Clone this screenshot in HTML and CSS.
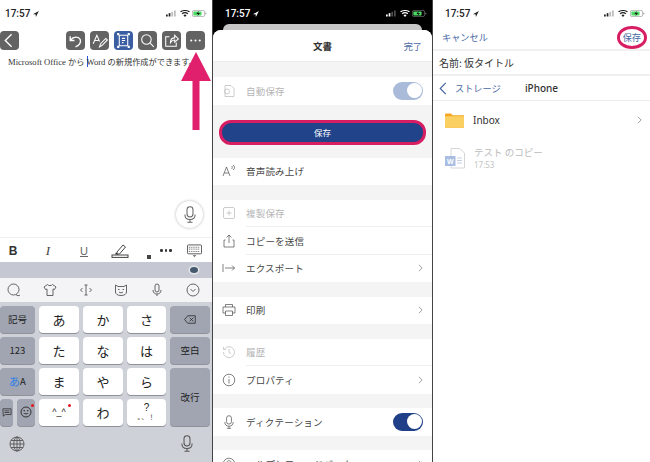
FILE: index.html
```html
<!DOCTYPE html>
<html lang="ja">
<head>
  <meta charset="UTF-8">
  <title>Word 保存手順</title>
  <link rel="stylesheet" href="styles.css">
</head>
<body>

  <svg class="defs" width="0" height="0">
    <symbol id="signal" viewBox="0 0 18 9">
      <rect x="0" y="6" width="2.6" height="3" fill="currentColor"/>
      <rect x="4" y="4" width="2.6" height="5" fill="currentColor"/>
      <rect x="8" y="2" width="2.6" height="7" opacity=".3" fill="currentColor"/>
      <rect x="12" y="0" width="2.6" height="9" opacity=".3" fill="currentColor"/>
    </symbol>
    <symbol id="wifi" viewBox="0 0 14 10">
      <path d="M7 10 9.2 7.4C8 6.3 6 6.3 4.8 7.4ZM3.6 6 2.3 4.5C4.9 2.2 9.1 2.2 11.7 4.5L10.4 6C8.5 4.3 5.5 4.3 3.6 6ZM1.2 3.3 0 1.9C3.9-.7 10.1-.7 14 1.9L12.8 3.3C9.5.9 4.5.9 1.2 3.3Z" fill="currentColor"/>
    </symbol>
    <symbol id="battery" viewBox="0 0 22 10">
      <rect x=".5" y=".5" width="18" height="9" rx="2.4" fill="none" stroke="currentColor" opacity=".45"/>
      <rect x="2" y="2" width="12" height="6" rx="1" fill="#4cd964"/>
      <rect x="19.6" y="3.4" width="1.4" height="3.2" rx=".7" fill="currentColor" opacity=".5"/>
      <path d="M10 1 6.5 5.6H9L8 9l3.6-4.8H9Z" fill="#111"/>
    </symbol>
    <symbol id="chevron" viewBox="0 0 6 10">
      <path d="M1 1 5 5 1 9" fill="none" stroke="currentColor" stroke-width="1"/>
    </symbol>
    <symbol id="mic" viewBox="0 0 14 20">
      <rect x="3.5" y="1" width="7" height="12" rx="3.5" fill="none" stroke="currentColor" stroke-width="1.2"/>
      <path d="M1 10c0 4 2.500 6 6 6s6-2 6-6M7 16v3M4 19h6" fill="none" stroke="currentColor" stroke-width="1.200"/>
    </symbol>
  </svg>

  <div class="shots">

    <section class="phone">
      <div class="status">
        <span class="time">17:57 <i class="loc"></i></span>
        <span class="status-icons">
          <svg class="ic-signal"><use href="#signal"/></svg>
          <svg class="ic-wifi"><use href="#wifi"/></svg>
          <svg class="ic-battery"><use href="#battery"/></svg>
        </span>
      </div>

      <div class="toolbar">
        <span class="tool">
          <svg viewBox="0 0 18 18"><path d="M11 3 5 9l6 6" class="line"/></svg>
        </span>
        <span class="tool-space"></span>
        <span class="tool">
          <svg viewBox="0 0 18 18"><path d="M4 5v4h4M4.500 8.500C7 5 12 5 13.500 8c1 3-1 6-4.500 7" class="line"/></svg>
        </span>
        <span class="tool">
          <svg viewBox="0 0 18 18"><path d="M3 12 6.500 4 9 10M4.500 9H8M9 15l1-3 5-5 1.500 1.500-5 5Z" class="line thin"/></svg>
        </span>
        <span class="tool active">
          <svg viewBox="0 0 18 18"><path d="M5 4h8v10H5ZM7.500 7h3M7.500 9h3M7.500 11h1.500" class="line thin"/><path d="M3 2h2v2H3ZM13 2h2v2h-2ZM3 14h2v2H3ZM13 14h2v2h-2Z" fill="#fff"/></svg>
        </span>
        <span class="tool">
          <svg viewBox="0 0 18 18"><circle cx="8" cy="8" r="4.500" class="line thin"/><path d="m11.500 11.500 3.500 3.500" class="line thin"/></svg>
        </span>
        <span class="tool">
          <svg viewBox="0 0 18 18"><path d="M13.500 11v3.500h-10v-9H7M8 11c0-3 2-4.500 4-4.500V4l3.500 3.500L12 10.500V8.500c-2 0-3 1-4 2.500Z" class="line thin"/></svg>
        </span>
        <span class="tool">
          <svg viewBox="0 0 18 18"><circle cx="5" cy="9" r="1" fill="#fff"/><circle cx="9" cy="9" r="1" fill="#fff"/><circle cx="13" cy="9" r="1" fill="#fff"/></svg>
        </span>
      </div>

      <p class="doc-text">Microsoft Office <span class="doc-ja">から</span> <span class="caret"></span>Word <span class="doc-ja">の新規作成ができます。</span></p>

      <div class="doc-space">
        <span class="mic-btn"><svg><use href="#mic"/></svg></span>
      </div>

      <div class="format-bar">
        <span class="fmt fmt-b">B</span>
        <span class="fmt fmt-i">I</span>
        <span class="fmt fmt-u">U</span>
        <svg class="fmt-pen" viewBox="0 0 18 14"><path d="m6 8 6-7 2.500 2-6 7H6Z" fill="none" stroke="#444"/><path d="M5 8.500 4 10.500h3Z" fill="#222"/><rect x="1" y="11" width="16" height="2.400" fill="none" stroke="#444"/></svg>
        <i class="fmt-dot"></i>
        <span class="fmt-more"><i></i><i></i><i></i></span>
        <svg class="fmt-kb" viewBox="0 0 16 14"><rect x=".5" y=".5" width="15" height="9.500" rx="1" fill="none" stroke="#555"/><path d="M2 3h12M2 5h12M2 7.500h12" stroke="#555" stroke-dasharray="1 1"/><path d="m6 11.500 2 2 2-2" fill="#555"/></svg>
      </div>

      <div class="strip"><span class="strip-eye"></span></div>

      <div class="kb-tools">
        <svg viewBox="0 0 14 14"><circle cx="6.500" cy="6.500" r="5.500" class="kb-line"/><path d="M9 11.500c1 1.500 3 1.500 4 .5" class="kb-line"/></svg>
        <svg viewBox="0 0 14 14"><path d="M4.500 1.500 1 4l1.500 2.500L4 6v6.500h6V6l1.500.5L13 4 9.500 1.500c-1 1.500-4 1.500-5 0Z" class="kb-line"/></svg>
        <svg viewBox="0 0 14 14"><path d="M7 2v10M5.500 2h3M5.500 12h3M3.500 5 1.500 7l2 2M10.500 5l2 2-2 2" class="kb-line"/></svg>
        <svg viewBox="0 0 14 14"><path d="M1.500 2 4 3.500h6L12.500 2v7c0 2-2 3.500-5.500 3.500S1.500 11 1.500 9ZM4 6.500h1.500M8.500 6.500H10M5 9c1 1 3 1 4 0" class="kb-line"/></svg>
        <svg viewBox="0 0 14 14"><rect x="5" y="1" width="4" height="8" rx="2" class="kb-line"/><path d="M3 7c0 3 2 4 4 4s4-1 4-4M7 11v2" class="kb-line"/></svg>
        <svg viewBox="0 0 14 14"><circle cx="7" cy="7" r="6" class="kb-line"/><path d="m4.500 6 2.500 2.500L9.500 6" class="kb-line"/></svg>
      </div>

      <div class="keyboard">
        <div class="keys">
          <span class="key gray small">記号</span>
          <span class="key">あ</span>
          <span class="key">か</span>
          <span class="key">さ</span>
          <span class="key gray">
            <svg class="del" viewBox="0 0 16 11"><path d="M5 .5h10v10H5L.8 5.500Z" fill="none" stroke="#222"/><path d="m7.500 3 5 5M12.500 3l-5 5" stroke="#222"/></svg>
          </span>
          <span class="key gray small">123</span>
          <span class="key">た</span>
          <span class="key">な</span>
          <span class="key">は</span>
          <span class="key gray small">空白</span>
          <span class="key gray small"><b class="kana">あ</b>A</span>
          <span class="key">ま</span>
          <span class="key">や</span>
          <span class="key">ら</span>
          <span class="key gray small tall">改行</span>
          <span class="key-pair">
            <span class="key gray">
              <svg class="msg" viewBox="0 0 12 11"><path d="M1 1h10v7H4L1.500 10Z" fill="none" stroke="#333"/><path d="M3 3.500h6M3 5.500h6" stroke="#333"/></svg>
            </span>
            <span class="key gray emoji-key">
              <svg class="smile" viewBox="0 0 12 12"><circle cx="6" cy="6" r="5" fill="none" stroke="#333"/><circle cx="4.200" cy="4.800" r=".8" fill="#333"/><circle cx="7.800" cy="4.800" r=".8" fill="#333"/><path d="M3.500 7.200c1 1.500 4 1.500 5 0Z" fill="#333"/></svg>
              <i class="red-dot"></i>
            </span>
          </span>
          <span class="key face">^_^<i class="red-dot"></i></span>
          <span class="key">わ</span>
          <span class="key punct"><span class="punct-q">?</span><small>。、！</small></span>
        </div>
        <div class="kb-bottom">
          <svg class="globe" viewBox="0 0 16 16"><circle cx="8" cy="8" r="7" class="kb-line"/><ellipse cx="8" cy="8" rx="3.200" ry="7" class="kb-line"/><path d="M8 1v14M1 8h14M2 4.500h12M2 11.500h12" class="kb-line"/></svg>
          <svg class="kb-mic"><use href="#mic"/></svg>
        </div>
      </div>

      <svg class="arrow" viewBox="0 0 30 78"><path d="M15 0 30 29H18.500V78H11.500V29H0Z" fill="#e0206c"/></svg>
    </section>

    <section class="phone dark">
      <div class="status">
        <span class="time">17:57 <i class="loc"></i></span>
        <span class="status-icons">
          <svg class="ic-signal"><use href="#signal"/></svg>
          <svg class="ic-wifi"><use href="#wifi"/></svg>
          <svg class="ic-battery"><use href="#battery"/></svg>
        </span>
      </div>
      <div class="sheet-back"></div>
      <div class="sheet">
        <div class="sheet-head">
          <span class="sheet-title">文書</span>
          <span class="link">完了</span>
        </div>

        <div class="menu first">
          <div class="row off">
            <svg class="row-ic" viewBox="0 0 14 14"><path d="M3 1.500h6L12 4.500v8H3Z" class="ic-line"/><circle cx="5" cy="7.500" r="2.500" class="ic-line"/></svg>
            <span class="row-text">自動保存</span>
            <span class="switch pale"></span>
          </div>
        </div>

        <div class="save-wrap"><span class="save-btn">保存</span></div>

        <div class="menu">
          <div class="row">
            <svg class="row-ic" viewBox="0 0 14 14"><path d="M1 12 4.500 3 8 12M2.300 9h4.400M9.500 2c1 .8 1 2 0 3M11 1c2 1.500 2 3.500 0 5" class="ic-line"/></svg>
            <span class="row-text">音声読み上げ</span>
          </div>
        </div>

        <div class="menu">
          <div class="row off line-below">
            <svg class="row-ic" viewBox="0 0 14 14"><rect x="1.500" y="1.500" width="11" height="11" rx="1.500" class="ic-line"/><path d="M7 4.500v5M4.500 7h5" class="ic-line"/></svg>
            <span class="row-text">複製保存</span>
          </div>
          <div class="row line-below">
            <svg class="row-ic" viewBox="0 0 14 14"><path d="M3.500 6H2v7h10V6h-1.500M7 9V1M4.500 3.500 7 1l2.500 2.500" class="ic-line"/></svg>
            <span class="row-text">コピーを送信</span>
          </div>
          <div class="row">
            <svg class="row-ic" viewBox="0 0 14 14"><path d="M1 3v8M3 7h9.500M10 4.500 12.500 7 10 9.500" class="ic-line"/></svg>
            <span class="row-text">エクスポート</span>
            <svg class="chev"><use href="#chevron"/></svg>
          </div>
        </div>

        <div class="menu">
          <div class="row">
            <svg class="row-ic" viewBox="0 0 14 14"><path d="M3.500 4V1.500h7V4M3.500 10H1V4h12v6h-2.500M3.500 8h7v4.500h-7Z" class="ic-line"/></svg>
            <span class="row-text">印刷</span>
            <svg class="chev"><use href="#chevron"/></svg>
          </div>
        </div>

        <div class="menu">
          <div class="row off line-below">
            <svg class="row-ic" viewBox="0 0 14 14"><path d="M2.500 4A5.500 5.500 0 1 1 1.500 7M1.500 2v2.500H4M7 4v3.500l2 1" class="ic-line"/></svg>
            <span class="row-text">履歴</span>
          </div>
          <div class="row">
            <svg class="row-ic" viewBox="0 0 14 14"><circle cx="7" cy="7" r="5.800" class="ic-line"/><path d="M7 6v4.500M7 3.500v1.200" class="ic-line"/></svg>
            <span class="row-text">プロパティ</span>
            <svg class="chev"><use href="#chevron"/></svg>
          </div>
        </div>

        <div class="menu">
          <div class="row">
            <svg class="row-ic mic-ic"><use href="#mic"/></svg>
            <span class="row-text">ディクテーション</span>
            <span class="switch"></span>
          </div>
        </div>

        <div class="menu">
          <div class="row">
            <svg class="row-ic" viewBox="0 0 14 14"><circle cx="7" cy="7" r="5.800" class="ic-line"/><path d="M5 5.500c0-2.500 4-2.500 4 0 0 1.500-2 1.500-2 3" class="ic-line"/></svg>
            <span class="row-text">ヘルプとフィードバック</span>
            <svg class="chev"><use href="#chevron"/></svg>
          </div>
        </div>
      </div>
    </section>

    <section class="phone">
      <div class="status">
        <span class="time">17:57 <i class="loc"></i></span>
        <span class="status-icons">
          <svg class="ic-signal"><use href="#signal"/></svg>
          <svg class="ic-wifi"><use href="#wifi"/></svg>
          <svg class="ic-battery"><use href="#battery"/></svg>
        </span>
      </div>

      <div class="save-head">
        <span class="link">キャンセル</span>
        <span class="link ringed">保存</span>
      </div>

      <div class="name-row">名前: 仮タイトル</div>

      <div class="crumbs">
        <svg class="back" viewBox="0 0 8 14"><path d="M7 1 1 7l6 6" fill="none" stroke="#3f5f9e" stroke-width="1.200"/></svg>
        <span class="link">ストレージ</span>
        <span class="crumb-title">iPhone</span>
      </div>

      <div class="file-row">
        <svg class="folder" viewBox="0 0 20 15"><path d="M0 1.500C0 .7.500 0 1.300 0h5L8 2h12v13H0Z" fill="#f6a623"/><rect y="3" width="20" height="12" rx="1" fill="#fbd063"/></svg>
        <span class="file-name">Inbox</span>
        <svg class="chev"><use href="#chevron"/></svg>
      </div>

      <div class="file-row disabled">
        <svg class="word" viewBox="0 0 20 21"><path d="M6 .5h8.500L19.500 5v15H6Z" fill="#fff" stroke="#d5d5d5"/><path d="M12 10h5M12 12.500h5M12 15h5" stroke="#c5d0e4"/><rect y="8" width="10.500" height="10" fill="#a9bee2"/><text x="5.200" y="16" class="word-w">W</text></svg>
        <span class="file-info">
          <span class="file-title">テスト のコピー</span>
          <span class="file-date">17:53</span>
        </span>
      </div>
    </section>

  </div>

</body>
</html>
```

FILE: styles.css
```css
* {
  box-sizing: border-box;
}

html, body {
  margin: 0;
  height: 462px;
  overflow: hidden;
}

body {
  font-family: "Noto Sans CJK JP", "Noto Sans", sans-serif;
  color: #333;
  background: #fff;
}

.defs {
  position: absolute;
}

.shots {
  display: grid;
  grid-template-columns: 212px 219px 217px;
  gap: 1px;
  height: 462px;
  background: #444;
}

.phone {
  position: relative;
  display: flex;
  flex-direction: column;
  height: 462px;
  overflow: hidden;
  background: #fff;
}

.phone.dark {
  background: #000;
  color: #fff;
}

/* status bar */
.status {
  flex: none;
  height: 24px;
  padding: 3px 5px 0 5px;
  display: flex;
  justify-content: space-between;
  align-items: center;
  font: 500 10px Roboto, sans-serif;
  color: #222;
}

.phone.dark .status {
  color: #fff;
  padding-left: 12px;
}

.phone:last-child .status {
  padding-left: 12px;
}

.loc {
  display: inline-block;
  width: 6px;
  height: 6px;
  background: currentColor;
  clip-path: polygon(100% 0, 0 55%, 45% 55%, 50% 100%);
}

.status-icons {
  display: flex;
  align-items: center;
  gap: 2px;
}

.status-icons svg {
  color: inherit;
}

.ic-signal {
  width: 12px;
  height: 7px;
}

.ic-wifi {
  width: 10px;
  height: 7px;
}

.ic-battery {
  width: 15px;
  height: 7px;
}

/* word toolbar */
.toolbar {
  flex: none;
  height: 19px;
  margin-top: 7px;
  padding-right: 7px;
  display: flex;
  gap: 5px;
}

.tool {
  width: 19px;
  height: 19px;
  border-radius: 4px;
  background: #636363;
}

.tool svg {
  display: block;
  width: 19px;
  height: 19px;
}

.tool.active {
  background: #3b5ea3;
}

.tool-space {
  flex: 1;
}

.line {
  fill: none;
  stroke: #fff;
  stroke-width: 1.300;
}

.line.thin {
  stroke-width: 1;
}

.doc-text {
  margin: 4px 0 0 8px;
  font: 8.600px/16px "Liberation Serif", "Noto Sans CJK JP", serif;
  white-space: nowrap;
  color: #333;
}

.doc-ja {
  font-size: 8.200px;
}

.caret {
  display: inline-block;
  width: 1px;
  height: 11px;
  margin-right: -1px;
  vertical-align: -2px;
  background: #2b55d8;
}

.doc-space {
  flex: 1;
  display: flex;
  justify-content: flex-end;
  align-items: flex-end;
  padding: 0 9px 9px 0;
}

.mic-btn {
  width: 27px;
  height: 27px;
  border-radius: 50%;
  background: #fff;
  box-shadow: 0 0 3px rgba(0,0,0,0.3);
  display: flex;
  align-items: center;
  justify-content: center;
  color: #666;
}

.mic-btn svg {
  width: 12px;
  height: 17px;
}

/* format bar */
.format-bar {
  position: relative;
  flex: none;
  height: 25px;
  padding-top: 2px;
  border-top: 1px solid #f0f0f0;
  display: grid;
  grid-template-columns: 26px 44px 28px 44px 14px 20px 36px;
  align-items: center;
  justify-items: center;
}

.fmt {
  font-size: 12px;
  line-height: 1;
  color: #444;
}

.fmt-b {
  font: bold 12px "Liberation Sans", sans-serif;
  color: #333;
}

.fmt-i {
  font: italic 13px "Liberation Serif", serif;
}

.fmt-u {
  font: 11px "Liberation Sans", sans-serif;
  text-decoration: underline;
  color: #666;
}

.fmt-pen {
  width: 18px;
  height: 14px;
}

.fmt-dot {
  align-self: end;
  margin-bottom: 3px;
  width: 4px;
  height: 4px;
  background: #444;
}

.fmt-more {
  display: flex;
  gap: 2px;
}

.fmt-more i {
  width: 2.500px;
  height: 2.500px;
  border-radius: 50%;
  background: #333;
}

.fmt-kb {
  width: 15px;
  height: 14px;
}

.strip {
  flex: none;
  height: 16px;
  padding-right: 14px;
  background: #c5c8d3;
  display: flex;
  justify-content: flex-end;
  align-items: center;
}

.strip-eye {
  width: 8px;
  height: 6px;
  border-radius: 50%;
  background: #44586e;
  box-shadow: 0 0 0 1.500px #e6e6ea;
}

.kb-tools {
  flex: none;
  height: 24px;
  padding: 0 12px 0 7px;
  background: #f4f4f6;
  display: flex;
  justify-content: space-between;
  align-items: center;
}

.kb-tools svg {
  width: 14px;
  height: 14px;
}

.kb-line {
  fill: none;
  stroke: #555;
  stroke-width: 0.900;
}

/* keyboard */
.keyboard {
  flex: 1;
  display: flex;
  flex-direction: column;
  background: #cfd1d9;
  padding-top: 4px;
}

.keys {
  display: grid;
  grid-template-columns: 35px 40px 40px 39px 40px;
  grid-auto-rows: 27px;
  gap: 4px;
  padding-right: 2px;
}

.key {
  display: flex;
  align-items: center;
  justify-content: center;
  position: relative;
  border-radius: 4px;
  background: #fff;
  box-shadow: 0 1px 0 #8f929b;
  font-size: 13px;
  color: #222;
}

.key.gray {
  background: #a0a5b1;
}

.key.small {
  font-size: 9.500px;
}

.key.tall {
  grid-row: span 2;
}

.key-pair {
  display: grid;
  grid-template-columns: 13px 18px;
  gap: 4px;
}

.kana {
  font-weight: 400;
  font-size: 11px;
  color: #2f7fe8;
}

.del {
  width: 12px;
  height: 9px;
}

.msg {
  width: 10px;
  height: 9px;
}

.smile {
  width: 12px;
  height: 12px;
}

.red-dot {
  position: absolute;
  top: 5px;
  right: 8px;
  width: 3px;
  height: 3px;
  border-radius: 50%;
  background: #e3141c;
}

.emoji-key .red-dot {
  top: 5px;
  right: 1px;
}

.face {
  font: 9px "Liberation Sans", sans-serif;
}

.punct {
  flex-direction: column;
  justify-content: flex-start;
  padding-top: 3px;
}

.punct-q {
  font: 10px/11px "Liberation Sans", sans-serif;
}

.punct small {
  font: 6px/8px "Liberation Sans", "Noto Sans CJK JP", sans-serif;
  letter-spacing: 1px;
}

.kb-bottom {
  flex: 1;
  display: flex;
  justify-content: space-between;
  align-items: center;
  padding: 0 19px 0 9px;
}

.globe {
  width: 16px;
  height: 16px;
}

.kb-mic {
  width: 12px;
  height: 17px;
  color: #555;
}

.arrow {
  position: absolute;
  left: 181px;
  top: 52px;
  width: 30px;
  height: 78px;
}

/* document sheet */
.sheet-back {
  flex: none;
  height: 12px;
  margin: 0 10px -6px 10px;
  border-radius: 6px 6px 0 0;
  background: #c6c6c6;
}

.sheet {
  flex: 1;
  border-radius: 8px 8px 0 0;
  background: #f4f4f4;
  color: #333;
  position: relative;
  overflow: hidden;
}

.sheet-head {
  height: 32px;
  padding: 0 10px;
  background: #fff;
  border-bottom: 1px solid #ebebeb;
  display: flex;
  justify-content: flex-end;
  align-items: center;
  position: relative;
}

.sheet-title {
  position: absolute;
  left: 0;
  right: 0;
  text-align: center;
  font-size: 9.500px;
  font-weight: 700;
}

.link {
  font-size: 9.200px;
  color: #4a6aa6;
}

.menu {
  margin-bottom: 14.500px;
  background: #fff;
}

.menu.first {
  margin-top: 15px;
  margin-bottom: 0;
}

.row {
  height: 27.500px;
  padding: 0 9px 0 9px;
  display: flex;
  align-items: center;
  position: relative;
  color: #444;
}

.row.off {
  color: #b5b5b5;
}

.line-below::after {
  content: "";
  position: absolute;
  left: 33px;
  right: 0;
  bottom: 0;
  border-bottom: 1px solid #efefef;
}

.row-ic {
  flex: none;
  width: 14px;
  height: 14px;
  margin-right: 10px;
}

.mic-ic {
  color: #666;
}

.ic-line {
  fill: none;
  stroke: currentColor;
  stroke-width: 0.900;
  opacity: 0.75;
}

.row-text {
  flex: 1;
  font-size: 9.500px;
  letter-spacing: 0.200px;
}

.chev {
  flex: none;
  width: 5px;
  height: 8px;
  color: #888;
}

.switch {
  flex: none;
  position: relative;
  width: 30px;
  height: 18px;
  border-radius: 9px;
  background: #1f4088;
}

.switch::after {
  content: "";
  position: absolute;
  top: 1.500px;
  right: 1.500px;
  width: 15px;
  height: 15px;
  border-radius: 50%;
  background: #fff;
}

.switch.pale {
  background: #a9bbd9;
}

.save-wrap {
  padding: 15px 6px 13px 6px;
}

.save-btn {
  display: block;
  height: 25px;
  border: 3px solid #d81e63;
  border-radius: 12px;
  background: #20438a;
  color: #fff;
  font-size: 8.500px;
  line-height: 18px;
  text-align: center;
}

/* save dialog */
.save-head {
  flex: none;
  height: 25px;
  padding: 0 3px 0 9px;
  display: flex;
  justify-content: space-between;
  align-items: center;
}

.ringed {
  padding: 1px 3px;
  border: 3px solid #d81e63;
  border-radius: 50%;
  line-height: 15px;
  margin-top: 2px;
}

.name-row {
  flex: none;
  height: 27px;
  padding: 0 0 0 6px;
  border-top: 2px solid #f0f0f0;
  border-bottom: 2px solid #f0f0f0;
  font-size: 10px;
  line-height: 23px;
  color: #333;
}

.crumbs {
  flex: none;
  position: relative;
  height: 25px;
  padding: 0 0 0 6px;
  border-bottom: 1px solid #ececec;
  display: flex;
  align-items: center;
  gap: 8px;
}

.back {
  width: 8px;
  height: 13px;
}

.crumb-title {
  position: absolute;
  left: 0;
  right: 0;
  text-align: center;
  font: 500 10px "Noto Sans", sans-serif;
}

.file-row {
  flex: none;
  height: 38px;
  padding: 0 8px 0 12px;
  display: flex;
  align-items: center;
}

.folder {
  flex: none;
  width: 19px;
  height: 15px;
  margin-right: 9px;
}

.word {
  flex: none;
  width: 20px;
  height: 21px;
  margin-right: 9px;
}

.word-w {
  font: bold 7px "Liberation Sans", sans-serif;
  fill: #fff;
  text-anchor: middle;
}

.file-name {
  flex: 1;
  font: 10px "Noto Sans", sans-serif;
}

.file-info {
  display: flex;
  flex-direction: column;
  gap: 1px;
  margin-bottom: 2px;
}

.file-title {
  font-size: 9.500px;
  line-height: 14px;
  color: #bbb;
}

.file-date {
  font: 8px/10px "Noto Sans", sans-serif;
  color: #c4c4c4;
}
```
